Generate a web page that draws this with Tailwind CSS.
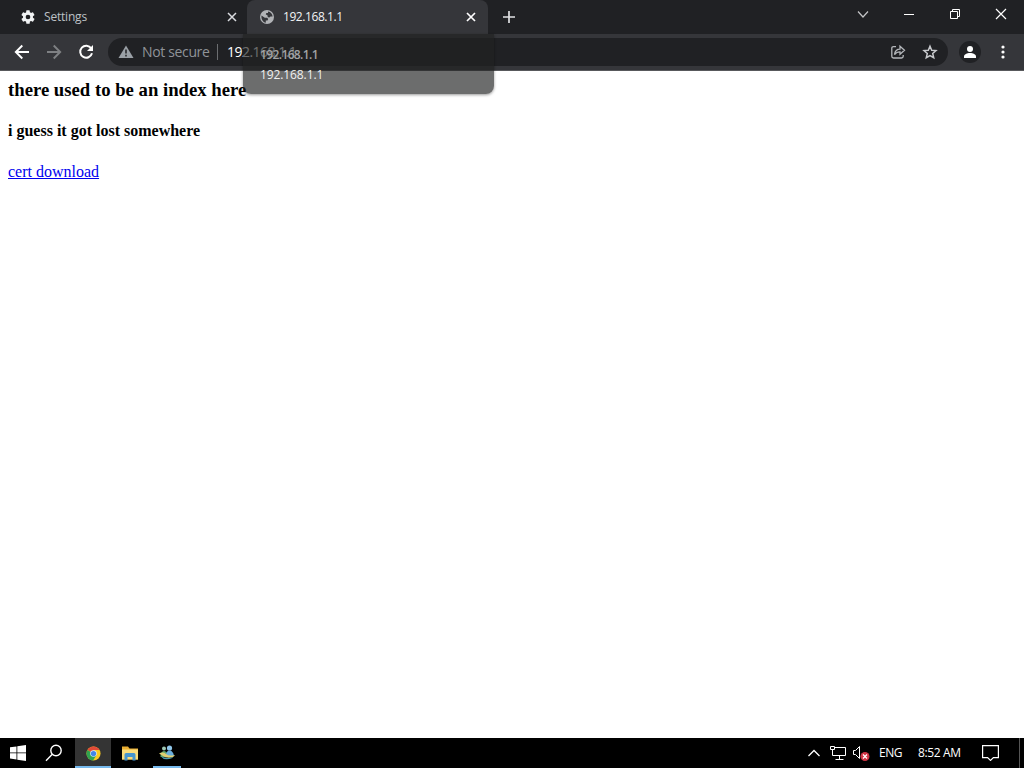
<!DOCTYPE html>
<html lang="en">
<head>
<meta charset="utf-8">
<title>192.168.1.1</title>
<script src="https://cdn.jsdelivr.net/npm/@tailwindcss/browser@4"></script>
</head>
<body class="w-[1024px] h-[768px] overflow-hidden bg-white flex flex-col relative font-['Open_Sans','Noto_Sans',sans-serif]">
<!-- Tab strip -->
<header class="h-[34px] shrink-0 bg-[#202124] flex items-center text-[12px] leading-none">
  <div class="w-[247px] h-full flex items-center pl-[20px] pr-[10px]">
    <svg class="w-4 h-4 shrink-0" viewBox="0 0 24 24" fill="#f1f3f4"><path d="M19.4 13a7.500 7.500 0 0 0 0-2l2.100-1.650a.5.5 0 0 0 .12-.64l-2-3.460a.5.5 0 0 0-.61-.22l-2.490 1a7.300 7.300 0 0 0-1.690-.98l-.38-2.650A.5.5 0 0 0 14 2h-4a.5.5 0 0 0-.49.42l-.38 2.650a7.700 7.700 0 0 0-1.690.98l-2.490-1a.5.5 0 0 0-.61.22l-2 3.460a.5.5 0 0 0 .12.64L4.570 11a8 8 0 0 0 0 2l-2.110 1.650a.5.5 0 0 0-.12.64l2 3.460c.12.22.39.3.61.22l2.490-1c.52.4 1.080.73 1.690.98l.38 2.650c.03.24.24.4.49.4h4c.25 0 .46-.18.49-.42l.38-2.650a7.700 7.700 0 0 0 1.690-.98l2.490 1c.23.09.49 0 .61-.22l2-3.460a.5.5 0 0 0-.12-.64zM12 15.500a3.500 3.500 0 1 1 0-7 3.500 3.500 0 0 1 0 7z"/></svg>
    <span class="ml-2 text-[#bdc1c6] tracking-[-0.2px]">Settings</span>
    <svg class="w-[10px] h-[10px] ml-auto" viewBox="0 0 10 10" stroke="#dadce0" stroke-width="1.5"><path d="M1 1l8 8M9 1l-8 8"/></svg>
  </div>
  <div class="w-[241px] h-full flex items-center pl-[12px] pr-[12px] bg-[#35363a] rounded-t-lg">
    <svg class="w-4 h-4 shrink-0" viewBox="0 0 16 16"><circle cx="8" cy="8" r="7" fill="#b1b3b6"/><path d="M2.500 6.500l3.300 2.300h2.400l1 1.200-.7 1.600H6.800v2.200C4 13.200 2 10.300 2.500 6.500zM9 2.500c2.700.4 4.400 2.300 4.600 5H11.500L10 8.800 8.500 7.600V6.200L6.800 5.400 7.300 4H9z" fill="#35363a"/></svg>
    <span class="ml-2 text-[#f1f3f4] tracking-[-0.43px]">192.168.1.1</span>
    <svg class="w-[10px] h-[10px] ml-auto" viewBox="0 0 10 10" stroke="#fff" stroke-width="1.7"><path d="M1 1l8 8M9 1l-8 8"/></svg>
  </div>
  <svg class="w-3 h-3 ml-[15px]" viewBox="0 0 12 12" stroke="#e0e1e3" stroke-width="1.7"><path d="M6 0v12M0 6h12"/></svg>
  <div class="ml-auto h-[28px] self-start flex items-center">
    <svg class="w-[46px] h-[28px]" viewBox="0 0 46 28" fill="none" stroke="#c4c5c7" stroke-width="1.2"><path d="M18 11.500l5 5.500 5-5.500"/></svg>
    <svg class="w-[46px] h-[28px]" viewBox="0 0 46 28" stroke="#fff"><path d="M18 14.500h10"/></svg>
    <svg class="w-[46px] h-[28px]" viewBox="0 0 46 28" fill="none" stroke="#fff"><path d="M18.500 11.500h7v7h-7zM20.500 11.500v-2h7v7h-2"/></svg>
    <svg class="w-[46px] h-[28px]" viewBox="0 0 46 28" stroke="#fff" stroke-width="1.2"><path d="M18 9l10 10M28 9l-10 10"/></svg>
  </div>
</header>
<!-- Toolbar -->
<nav class="h-[37px] shrink-0 bg-[#35363a] border-b border-[#58595c] flex items-center pl-[14px]">
  <svg class="w-4 h-4" viewBox="0 0 16 16" fill="none" stroke="#fff" stroke-width="1.9"><path d="M15 8H2M8.300 1.500L1.800 8l6.500 6.500"/></svg>
  <svg class="w-4 h-4 ml-4" viewBox="0 0 16 16" fill="none" stroke="#7e8083" stroke-width="1.9"><path d="M1 8h13M7.700 1.500L14.200 8l-6.500 6.500"/></svg>
  <svg class="w-4 h-4 ml-4" viewBox="0 0 16 16" fill="none" stroke="#fff" stroke-width="2"><path d="M13.200 4.300A6 6 0 1 0 14 9.300"/><path d="M15 1v6H9z" fill="#fff" stroke="none"/></svg>
  <div class="ml-[14px] w-[840px] h-[28px] rounded-full bg-[#202124] flex items-center pl-[10px] pr-[10px] text-[14px] leading-none">
    <svg class="w-4 h-4" viewBox="0 0 16 16"><path d="M8 1.500L15.500 14H.5z" fill="#9aa0a6"/><path d="M8 5.500v4M8 10.800v1.600" stroke="#202124" stroke-width="1.500"/></svg>
    <span class="ml-2 w-[68px] whitespace-nowrap text-[#8f9398] tracking-[-0.35px]">Not secure</span>
    <span class="ml-[7px] w-px h-4 bg-[#6b6d70]"></span>
    <span class="ml-[9px] text-white tracking-[-0.52px]">192.168.1.1</span>
    <svg class="w-4 h-4 ml-auto" viewBox="0 0 16 16" fill="none" stroke="#b4b7bb" stroke-width="1.3"><path d="M6 2.600H3.500Q1.800 2.600 1.800 4.300v8Q1.800 14 3.500 14h8q1.700 0 1.700-1.700V11"/><path d="M4.500 10.500C5 7 7 5.200 10 5.200V2.300l4.500 4-4.500 4V7.800C7.500 7.800 6 8.500 4.500 10.500z"/></svg>
    <svg class="w-4 h-4 ml-4" viewBox="0 0 16 16" fill="none" stroke="#c8cacd" stroke-width="1.500"><path d="M8 2.200l1.700 4 4.300.4-3.300 2.900 1 4.200L8 11.500l-3.700 2.200 1-4.200L2 6.600l4.300-.4z"/></svg>
  </div>
  <svg class="w-[22px] h-[22px] ml-[11px]" viewBox="0 0 22 22"><circle cx="11" cy="11" r="11" fill="#202124"/><circle cx="11" cy="8" r="3" fill="#fff"/><path d="M5 17v-1.500c0-2.200 3-3.500 6-3.500s6 1.300 6 3.500V17z" fill="#fff"/></svg>
  <svg class="w-1 h-4 ml-[19.5px]" viewBox="0 0 4 16" fill="#fff"><circle cx="2" cy="3" r="1.600"/><circle cx="2" cy="8" r="1.600"/><circle cx="2" cy="13" r="1.600"/></svg>
</nav>
<!-- Page -->
<main class="flex-1 bg-white px-2 pt-[8px] font-['Liberation_Serif',serif] text-black">
  <h3 class="text-[18.72px] leading-[21px] font-bold">there used to be an index here</h3>
  <h4 class="mt-[22px] text-[16px] leading-[18px] font-bold">i guess it got lost somewhere</h4>
  <p class="mt-[23px] text-[16px] leading-[18px]"><a class="text-[#0000ee] underline" href="#">cert download</a></p>
</main>
<!-- Tab hover card, fading in -->
<aside class="absolute left-[243px] top-[34px] w-[251px] h-[60px] rounded-b-lg bg-[#202122]/66 shadow-[0_1px_3px_rgba(0,0,0,0.4)] pl-[17px] pt-[15px] text-[12px] leading-[12px]">
  <div class="font-semibold text-[#a2a3a5] tracking-[-0.62px]">192.168.1.1</div>
  <div class="mt-[8px] text-[#f0f0f0] tracking-[-0.1px]">192.168.1.1</div>
</aside>
<!-- Taskbar -->
<footer class="h-[30px] shrink-0 bg-black flex items-center text-white text-[12px] leading-none">
  <svg class="w-4 h-4 ml-[10px]" viewBox="0 0 16 16" fill="#fff"><path d="M0 2.300l6.500-.9v6.100H0zM7.300 1.300L16 0v7.500H7.300zM0 8.300h6.500v6.200L0 13.600zM7.300 8.300H16V16l-8.700-1.300z"/></svg>
  <svg class="w-[18px] h-[18px] ml-[19px]" viewBox="0 0 18 18" fill="none" stroke="#fff" stroke-width="1.400"><circle cx="11" cy="6.500" r="5.200"/><path d="M7.300 10.300L1 16.800"/></svg>
  <div class="ml-[12px] w-[36px] h-full bg-[#343434] border-b-2 border-[#76b9ed] flex items-center justify-center">
    <svg class="w-[15px] h-[15px] mt-[2px]" viewBox="0 0 16 16"><circle cx="8" cy="8" r="7.500" fill="#fbc91f"/><path d="M8 8L1.500 4.250A7.500 7.500 0 0 1 14.500 4.250H8z" fill="#e24a38"/><path d="M1.500 4.250A7.500 7.500 0 0 0 7.500 15.500L11 9.800 8 8z" fill="#30a350"/><circle cx="8" cy="8" r="3.500" fill="#dfe9f8"/><circle cx="8" cy="8" r="2.800" fill="#4285e8"/></svg>
  </div>
  <svg class="w-[18px] h-4 ml-[10px]" viewBox="0 0 18 16"><path d="M1 1.500h6l1.500 2H17V14.500H1z" fill="#e9ae32"/><path d="M1 4.500h16v10H1z" fill="#fbdc7b"/><path d="M3.500 15.500V9.500q0-1.500 1.500-1.500h8q1.500 0 1.500 1.500v6h-3V12h-5v3.500z" fill="#4695cf"/></svg>
  <div class="ml-[14px] w-[28px] h-full border-b-2 border-[#76b9ed] flex items-center justify-center">
    <svg class="w-[18px] h-4 mt-[2px]" viewBox="0 0 18 16"><circle cx="6" cy="3.500" r="2" fill="#9fc8b4"/><circle cx="11.500" cy="3" r="2.600" fill="#8fc6ea"/><path d="M2.500 12q0-6 3.500-6t4 6z" fill="#5ba56b"/><path d="M8 11q0-5.500 3.500-5.500T16 11z" fill="#6aaede"/><path d="M1 8.500q4-2 7 .5t9 1q-1 2.500-6 2.700-4 0-6-1.800-2-1.200-4-2.400z" fill="#e0cf72"/><path d="M3 11.500q6 2.500 12 .5-1 2-6 2.200Q5 14.500 3 11.500z" fill="#4a9db0"/></svg>
  </div>
  <svg class="w-3 h-3 ml-auto" viewBox="0 0 12 12" fill="none" stroke="#fff" stroke-width="1.300"><path d="M.5 9L6 3.500 11.500 9"/></svg>
  <svg class="w-[17px] h-4 ml-[9px]" viewBox="0 0 17 16" fill="none" stroke="#fff"><path d="M6 2.500h10.500v8H3.500V6M10.500 10.500v4M6.500 14.500h8M1.500 1.500h4v3h-4zM3.500 4.500v2"/></svg>
  <svg class="w-[17px] h-4 ml-[7px]" viewBox="0 0 17 16" fill="none"><path d="M.5 5.500h2l4-4v12l-4-4h-2z" stroke="#fff"/><circle cx="12" cy="11.500" r="4.500" fill="#cf3444"/><path d="M10 9.500l4 4M14 9.500l-4 4" stroke="#fff" stroke-width="1.200"/></svg>
  <span class="ml-[9px] w-[24px] whitespace-nowrap tracking-[-0.5px]">ENG</span>
  <span class="ml-[15px] w-[44px] whitespace-nowrap tracking-[-0.35px]">8:52 AM</span>
  <svg class="w-[17px] h-4 ml-5" viewBox="0 0 17 16" fill="none" stroke="#fff" stroke-width="1.200"><path d="M.6.6h15.800v12h-5L8.500 15.400 5.600 12.600h-5z"/></svg>
  <div class="ml-[20px] mr-[4px] w-px h-full bg-[#555]"></div>
</footer>
</body>
</html>
